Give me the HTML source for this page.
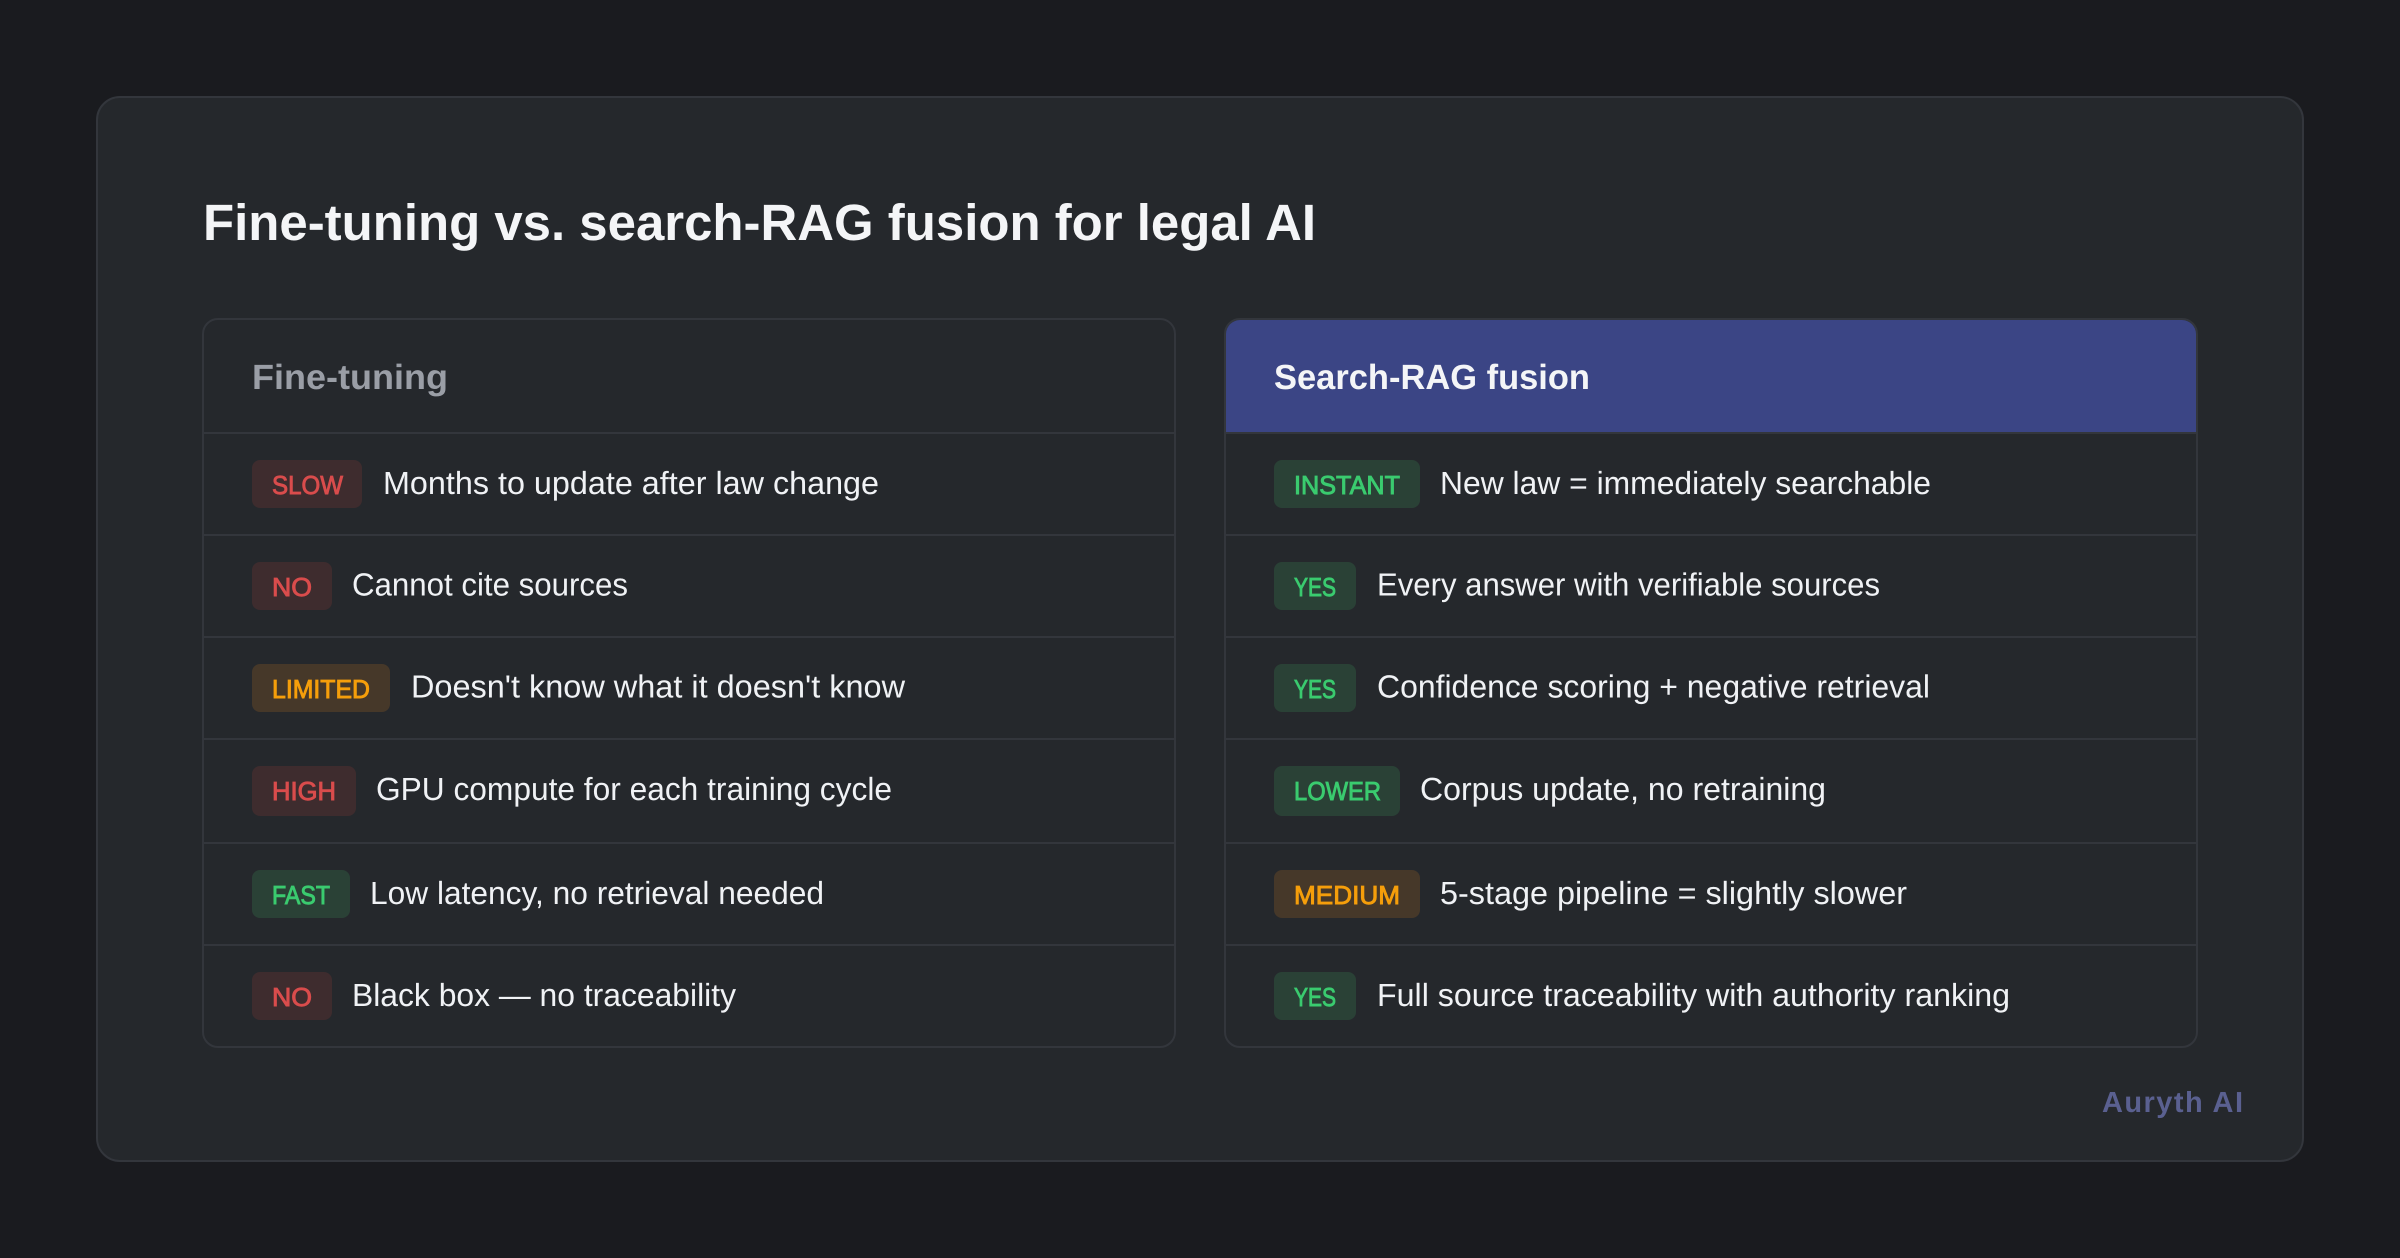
<!DOCTYPE html>
<html lang="en">
<head>
<meta charset="utf-8">
<title>Fine-tuning vs. search-RAG fusion for legal AI</title>
<style>
html,body{margin:0;padding:0;width:2400px;height:1258px;overflow:hidden;background:#1a1b1f}
svg{display:block}
text{font-family:"Liberation Sans",Arial,sans-serif;text-rendering:geometricPrecision}
.t{font-size:32px;fill:#f0f2f5}
.b{font-size:26px;font-weight:400;stroke-width:.9px}
.r{fill:#d94c4c;stroke:#d94c4c}.g{fill:#3acb6f;stroke:#3acb6f}.o{fill:#f59e0b;stroke:#f59e0b}
.rb{fill:#3e2c2e}.gb{fill:#2a4136}.ob{fill:#463829}
.sep{fill:#33363c}
</style>
</head>
<body>
<svg xmlns="http://www.w3.org/2000/svg" width="2400" height="1258" viewBox="0 0 2400 1258">
<rect width="2400" height="1258" fill="#1a1b1f"/>
<rect x="97" y="97" width="2206" height="1064" rx="23" fill="#25282c" stroke="#33363c" stroke-width="2"/>

<text x="203" y="240" font-size="51" font-weight="700" fill="#f4f5f7" textLength="1113" lengthAdjust="spacingAndGlyphs">Fine-tuning vs. search-RAG fusion for legal AI</text>

<!-- Left panel -->
<rect x="203" y="319" width="972" height="728" rx="15" fill="none" stroke="#33363c" stroke-width="2"/>
<text x="252" y="389" font-size="35" font-weight="700" fill="#9a9ea6" textLength="196" lengthAdjust="spacingAndGlyphs">Fine-tuning</text>
<rect class="sep" x="204" y="432" width="970" height="2"/>
<rect class="sep" x="204" y="534" width="970" height="2"/>
<rect class="sep" x="204" y="636" width="970" height="2"/>
<rect class="sep" x="204" y="738" width="970" height="2"/>
<rect class="sep" x="204" y="842" width="970" height="2"/>
<rect class="sep" x="204" y="944" width="970" height="2"/>

<rect class="rb" x="252" y="460" width="110" height="48" rx="8"/>
<text class="b r" x="272" y="494" textLength="71" lengthAdjust="spacingAndGlyphs">SLOW</text>
<text class="t" x="383" y="494" textLength="496" lengthAdjust="spacingAndGlyphs">Months to update after law change</text>

<rect class="rb" x="252" y="562" width="80" height="48" rx="8"/>
<text class="b r" x="272" y="596" textLength="40" lengthAdjust="spacingAndGlyphs">NO</text>
<text class="t" x="352" y="595.5" textLength="276" lengthAdjust="spacingAndGlyphs">Cannot cite sources</text>

<rect class="ob" x="252" y="664" width="138" height="48" rx="8"/>
<text class="b o" x="272" y="698" textLength="98" lengthAdjust="spacingAndGlyphs">LIMITED</text>
<text class="t" x="411" y="697.5" textLength="494" lengthAdjust="spacingAndGlyphs">Doesn't know what it doesn't know</text>

<rect class="rb" x="252" y="766" width="104" height="50" rx="8"/>
<text class="b r" x="272" y="800" textLength="64" lengthAdjust="spacingAndGlyphs">HIGH</text>
<text class="t" x="376" y="800" textLength="516" lengthAdjust="spacingAndGlyphs">GPU compute for each training cycle</text>

<rect class="gb" x="252" y="870" width="98" height="48" rx="8"/>
<text class="b g" x="272" y="904" textLength="58" lengthAdjust="spacingAndGlyphs">FAST</text>
<text class="t" x="370" y="904" textLength="454" lengthAdjust="spacingAndGlyphs">Low latency, no retrieval needed</text>

<rect class="rb" x="252" y="972" width="80" height="48" rx="8"/>
<text class="b r" x="272" y="1006" textLength="40" lengthAdjust="spacingAndGlyphs">NO</text>
<text class="t" x="352" y="1006" textLength="384" lengthAdjust="spacingAndGlyphs">Black box — no traceability</text>

<!-- Right panel -->
<rect x="1225" y="319" width="972" height="728" rx="15" fill="none" stroke="#33363c" stroke-width="2"/>
<path d="M1226 432V334a14 14 0 0 1 14-14H2182a14 14 0 0 1 14 14V432Z" fill="#3b4585"/>
<text x="1274" y="389" font-size="35" font-weight="700" fill="#f4f5f7" textLength="316" lengthAdjust="spacingAndGlyphs">Search-RAG fusion</text>
<rect class="sep" x="1226" y="432" width="970" height="2"/>
<rect class="sep" x="1226" y="534" width="970" height="2"/>
<rect class="sep" x="1226" y="636" width="970" height="2"/>
<rect class="sep" x="1226" y="738" width="970" height="2"/>
<rect class="sep" x="1226" y="842" width="970" height="2"/>
<rect class="sep" x="1226" y="944" width="970" height="2"/>

<rect class="gb" x="1274" y="460" width="146" height="48" rx="8"/>
<text class="b g" x="1294" y="494" textLength="106" lengthAdjust="spacingAndGlyphs">INSTANT</text>
<text class="t" x="1440" y="494" textLength="491" lengthAdjust="spacingAndGlyphs">New law = immediately searchable</text>

<rect class="gb" x="1274" y="562" width="82" height="48" rx="8"/>
<text class="b g" x="1294" y="596" textLength="42" lengthAdjust="spacingAndGlyphs">YES</text>
<text class="t" x="1377" y="595.5" textLength="503" lengthAdjust="spacingAndGlyphs">Every answer with verifiable sources</text>

<rect class="gb" x="1274" y="664" width="82" height="48" rx="8"/>
<text class="b g" x="1294" y="698" textLength="42" lengthAdjust="spacingAndGlyphs">YES</text>
<text class="t" x="1377" y="697.5" textLength="553" lengthAdjust="spacingAndGlyphs">Confidence scoring + negative retrieval</text>

<rect class="gb" x="1274" y="766" width="126" height="50" rx="8"/>
<text class="b g" x="1294" y="800" textLength="87" lengthAdjust="spacingAndGlyphs">LOWER</text>
<text class="t" x="1420" y="800" textLength="406" lengthAdjust="spacingAndGlyphs">Corpus update, no retraining</text>

<rect class="ob" x="1274" y="870" width="146" height="48" rx="8"/>
<text class="b o" x="1294" y="904" textLength="106" lengthAdjust="spacingAndGlyphs">MEDIUM</text>
<text class="t" x="1440" y="904" textLength="467" lengthAdjust="spacingAndGlyphs">5-stage pipeline = slightly slower</text>

<rect class="gb" x="1274" y="972" width="82" height="48" rx="8"/>
<text class="b g" x="1294" y="1006" textLength="42" lengthAdjust="spacingAndGlyphs">YES</text>
<text class="t" x="1377" y="1006" textLength="633" lengthAdjust="spacingAndGlyphs">Full source traceability with authority ranking</text>

<text x="2102" y="1112" font-size="29" font-weight="700" fill="#5a6090" textLength="141" lengthAdjust="spacing">Auryth AI</text>
</svg>
</body>
</html>
